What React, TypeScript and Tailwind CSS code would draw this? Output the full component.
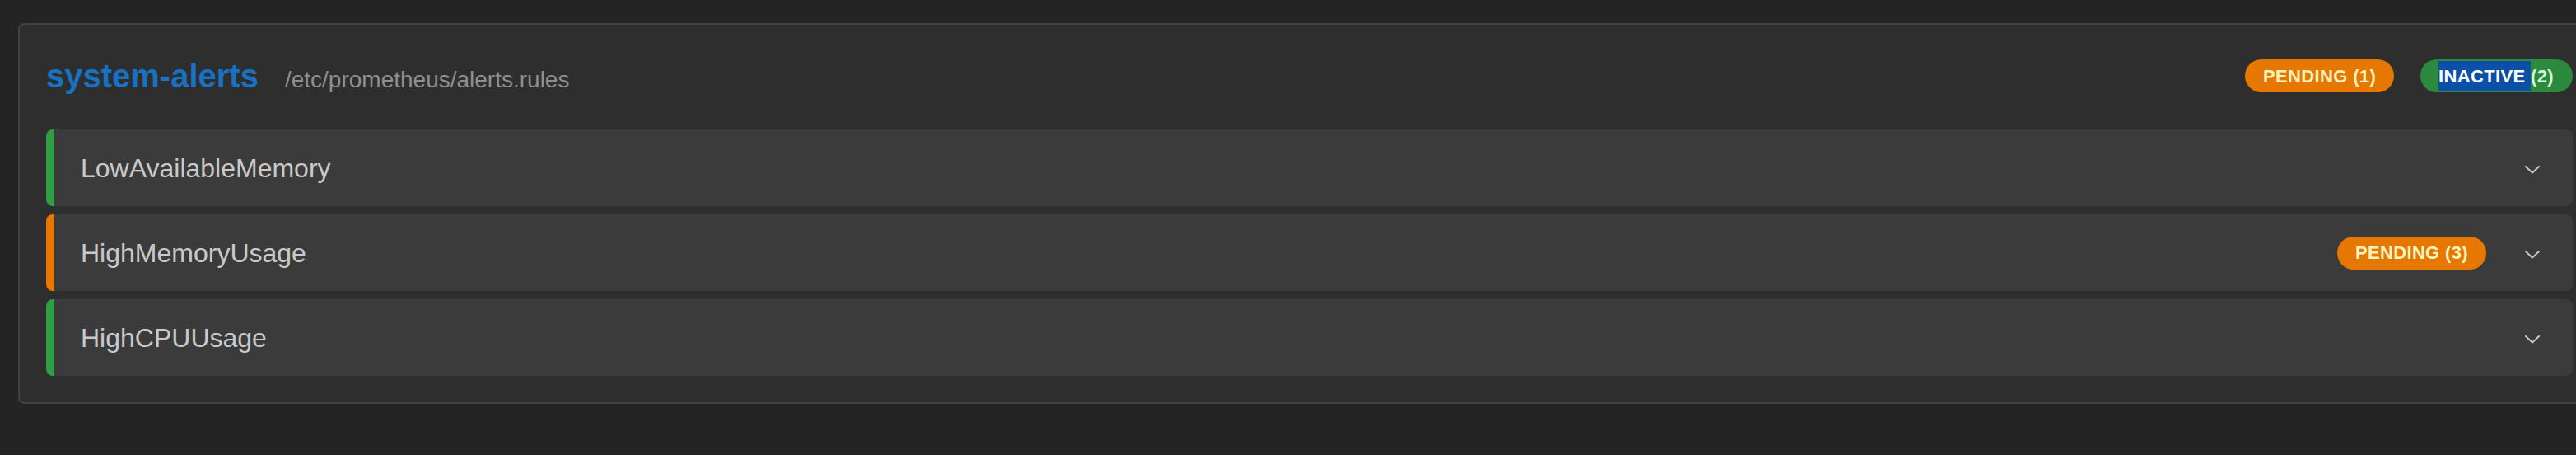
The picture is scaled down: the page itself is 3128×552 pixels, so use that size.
import React from "react";

type AlertState = "inactive" | "pending";

interface Rule {
	name: string;
	state: AlertState;
	pending?: number;
}

const rules: Rule[] = [
	{ name: "LowAvailableMemory", state: "inactive" },
	{ name: "HighMemoryUsage", state: "pending", pending: 3 },
	{ name: "HighCPUUsage", state: "inactive" },
];

function ChevronDown() {
	return (
		<svg
			viewBox="0 0 15 15"
			className="size-[30px] text-[#c9c9c9]"
			fill="none"
			aria-hidden="true"
		>
			<path
				d="M3.13523 6.15803C3.3241 5.95657 3.64052 5.94637 3.84197 6.13523L7.5 9.56464L11.158 6.13523C11.3595 5.94637 11.6759 5.95657 11.8648 6.15803C12.0536 6.35949 12.0434 6.67591 11.842 6.86477L7.84197 10.6148C7.64964 10.7951 7.35036 10.7951 7.15803 10.6148L3.15803 6.86477C2.95657 6.67591 2.94637 6.35949 3.13523 6.15803Z"
				fill="currentColor"
				fillRule="evenodd"
				clipRule="evenodd"
			/>
		</svg>
	);
}

function PendingBadge({ count }: { count: number }) {
	return (
		<span className="inline-flex h-[40px] items-center rounded-full bg-[#e67700] px-[22px] text-[22px] font-bold uppercase tracking-[0.35px] text-[#fff3bf]">
			Pending ({count})
		</span>
	);
}

function RuleRow({ rule }: { rule: Rule }) {
	const barColor =
		rule.state === "pending" ? "border-l-[#e67700]" : "border-l-[#2f9e44]";

	return (
		<div
			className={`flex h-[93px] items-center rounded-[8px] border-l-[10px] bg-[#3b3b3b] pl-[32px] pr-[34px] ${barColor}`}
		>
			<span className="flex-1 text-[32px] text-[#c9c9c9]">{rule.name}</span>
			<div className="flex items-center gap-[41px]">
				{rule.pending ? <PendingBadge count={rule.pending} /> : null}
				<ChevronDown />
			</div>
		</div>
	);
}

export default function App() {
	return (
		<div className="h-[552px] w-full overflow-hidden bg-[#242424] pl-[22px] pt-[28px] font-['Liberation_Sans',Arial,sans-serif]">
			<div className="w-[3136px] rounded-[8px] border-2 border-[#424242] bg-[#2e2e2e] px-[32px] pb-[32px] pt-[32px]">
				<div className="mb-[35px] flex h-[60px] items-center justify-between">
					<div className="flex items-baseline gap-[32px]">
						<h2 className="text-[40px] font-bold text-[#1971c2]">
							system-alerts
						</h2>
						<span className="text-[28px] text-[#8f8f8f]">
							/etc/prometheus/alerts.rules
						</span>
					</div>

					<div className="flex items-center gap-[32px]">
						<PendingBadge count={1} />
						<span className="inline-flex h-[40px] items-center rounded-full bg-[#2b8a3e] pl-[22px] pr-[23px] text-[22px] font-bold uppercase tracking-[0.35px] text-[#d3f9d8]">
							<span className="inline-flex h-[36px] items-center bg-[#0b4fa8] text-white">
								Inactive&nbsp;
							</span>
							(2)
						</span>
					</div>
				</div>

				<div className="flex flex-col gap-[10px]">
					{rules.map((rule) => (
						<RuleRow key={rule.name} rule={rule} />
					))}
				</div>
			</div>
		</div>
	);
}
